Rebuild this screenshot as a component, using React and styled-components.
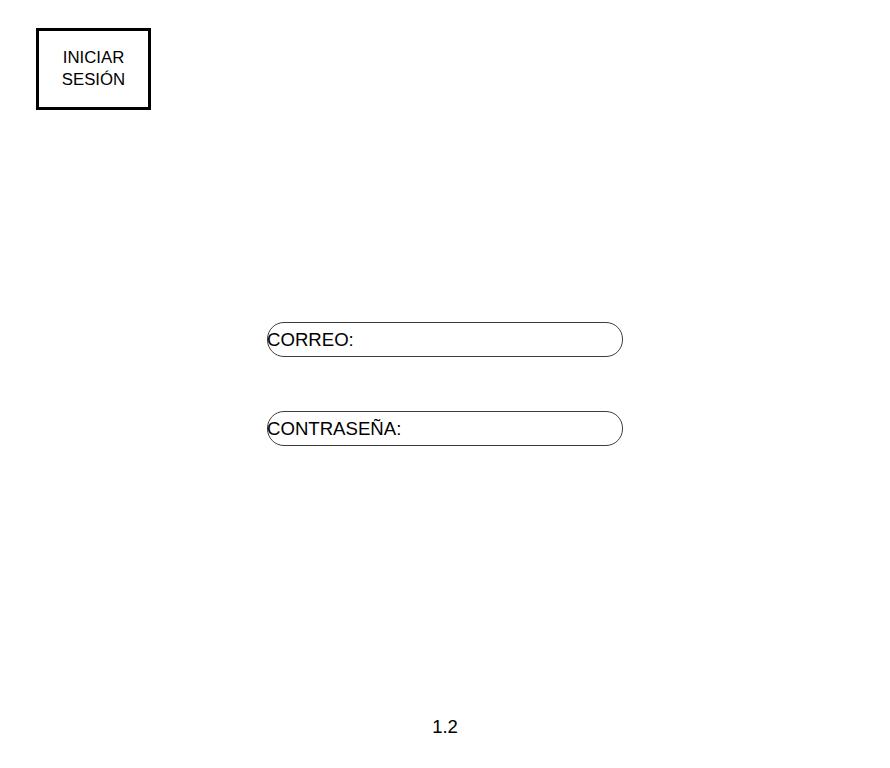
import styled, { createGlobalStyle } from "styled-components";

const GlobalStyle = createGlobalStyle`
  body {
    margin: 0;
    background: #ffffff;
    font-family: "Liberation Sans", Arial, sans-serif;
    color: #000000;
  }
`;

const Page = styled.div`
  width: 890px;
  height: 768px;
  display: flex;
  flex-direction: column;
  box-sizing: border-box;
  padding: 28px 0 0 36px;
`;

const LoginBox = styled.div`
  width: 115px;
  height: 82px;
  box-sizing: border-box;
  border: 3px solid #000000;
  display: flex;
  align-items: center;
  justify-content: center;
  text-align: center;
  font-size: 16.8px;
  line-height: 22px;
`;

const Form = styled.div`
  margin-top: 212px;
  margin-left: 231px;
  display: flex;
  flex-direction: column;
  gap: 54px;
`;

const Field = styled.div`
  width: 356px;
  height: 35px;
  box-sizing: border-box;
  border: 1px solid #3c3c3c;
  border-radius: 17px;
  display: flex;
  align-items: center;
  font-size: 18.6px;
`;

const Label = styled.span`
  margin-left: -1px;
`;

const Footer = styled.div`
  margin-top: auto;
  margin-left: -36px;
  padding-bottom: 30px;
  text-align: center;
  font-size: 18.5px;
`;

export default function App() {
  return (
    <>
      <GlobalStyle />
      <Page>
        <LoginBox>
          INICIAR
          <br />
          SESIÓN
        </LoginBox>
        <Form>
          <Field>
            <Label>CORREO:</Label>
          </Field>
          <Field>
            <Label>CONTRASEÑA:</Label>
          </Field>
        </Form>
        <Footer>1.2</Footer>
      </Page>
    </>
  );
}
